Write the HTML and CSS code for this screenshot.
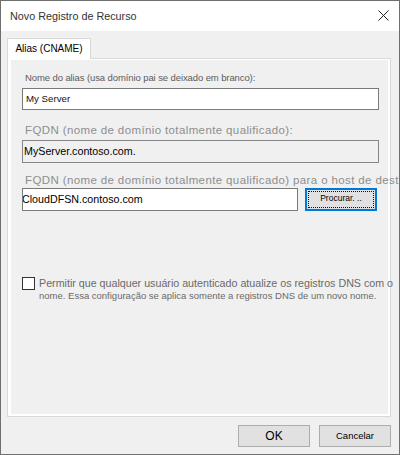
FILE: index.html
```html
<!DOCTYPE html>
<html lang="pt-BR">
<head>
<meta charset="utf-8">
<title>Novo Registro de Recurso</title>
<link rel="stylesheet" href="styles.css">
</head>
<body>
<div class="dialog">
  <div class="titlebar">
    <span class="title">Novo Registro de Recurso</span>
    <svg class="close" width="11" height="11" viewBox="0 0 11 11"><path d="M0.5 0.5 L10.5 10.5 M10.5 0.5 L0.5 10.5" stroke="#222" stroke-width="1" fill="none"/></svg>
  </div>
  <div class="body">
    <div class="tab">Alias (CNAME)</div>
    <div class="panel">
      <div class="lbl-small">Nome do alias (usa domínio pai se deixado em branco):</div>
      <div class="input1">My Server</div>
      <div class="lbl-fqdn first">FQDN (nome de domínio totalmente qualificado):</div>
      <div class="field2">MyServer.contoso.com.</div>
      <div class="lbl-fqdn second">FQDN (nome de domínio totalmente qualificado) para o host de dest</div>
      <div class="row">
        <div class="field3"><span>CloudDFSN.contoso.com</span></div>
        <div class="browse"><div class="focus">Procurar. ..</div></div>
      </div>
      <div class="check-row">
        <div class="checkbox"></div>
        <div class="check-text">
          <div class="line1">Permitir que qualquer usuário autenticado atualize os registros DNS com o</div>
          <div class="line2">nome. Essa configuração se aplica somente a registros DNS de um novo nome.</div>
        </div>
      </div>
    </div>
    <div class="buttons">
      <div class="btn ok">OK</div>
      <div class="btn cancel">Cancelar</div>
    </div>
  </div>
</div>
</body>
</html>
```

FILE: styles.css
```css
html, body {
  margin: 0;
  padding: 0;
  background: #f0f0f0;
}
body {
  font-family: "Liberation Sans", Arial, sans-serif;
}
.dialog {
  width: 400px;
  height: 455px;
  box-sizing: border-box;
  border: 1px solid #6f6f6f;
  background: #f0f0f0;
  overflow: hidden;
}
.titlebar {
  height: 30px;
  background: #ffffff;
  display: flex;
  align-items: center;
  justify-content: space-between;
  padding: 0 10px 0 9px;
}
.title {
  font-size: 10.8px;
  color: #333333;
}
.close {
  display: block;
  margin-top: -1px;
}
.body {
  padding: 7px 8px 0 6px;
}
.tab {
  position: relative;
  z-index: 1;
  width: 84px;
  height: 21px;
  box-sizing: border-box;
  border: 1px solid #d9d9d9;
  border-bottom: 0;
  background: #ffffff;
  margin-bottom: -1px;
  font-size: 10px;
  line-height: 19px;
  text-align: center;
  color: #000000;
}
.panel {
  height: 359px;
  box-sizing: border-box;
  border: 1px solid #d9d9d9;
  background: #f0f0f0;
  box-shadow: inset 3px 0 0 #ffffff, inset -2px 0 0 #ffffff, inset 0 -2px 0 #ffffff, inset 0 1px 0 #ffffff;
  padding: 13px 0 0 14px;
}
.lbl-small {
  font-size: 9.5px;
  line-height: 12px;
  letter-spacing: -0.1px;
  color: #5c5c5c;
  margin-left: 3px;
  white-space: nowrap;
}
.input1 {
  margin-top: 4px;
  width: 357px;
  height: 22px;
  box-sizing: border-box;
  border: 1px solid #7a7a7a;
  background: #ffffff;
  font-size: 9.7px;
  line-height: 20px;
  padding-left: 3px;
  color: #111111;
}
.lbl-fqdn {
  font-size: 11.5px;
  line-height: 14px;
  letter-spacing: 0.38px;
  color: #8e8e8e;
  margin-left: 3px;
  white-space: nowrap;
}
.lbl-fqdn.first {
  margin-top: 13px;
}
.lbl-fqdn.second {
  margin-top: 10px;
}
.field2 {
  margin-top: 3px;
  width: 357px;
  height: 23px;
  box-sizing: border-box;
  border: 1px solid #858585;
  background: #f0f0f0;
  font-size: 10.7px;
  line-height: 21px;
  padding-left: 1px;
  color: #000000;
}
.row {
  margin-top: 1px;
  display: flex;
  gap: 7px;
}
.field3 {
  width: 276px;
  height: 23px;
  box-sizing: border-box;
  border: 1px solid #7a7a7a;
  background: #ffffff;
  font-size: 10.7px;
  line-height: 21px;
  overflow: hidden;
  white-space: nowrap;
  color: #000000;
}
.field3 span {
  display: inline-block;
  margin-left: -1px;
}
.browse {
  width: 72px;
  height: 23px;
  box-sizing: border-box;
  border: 2px solid #0078d7;
  background: #e1e1e1;
  padding: 1px;
  display: flex;
}
.focus {
  flex: 1;
  border: 1px dotted #111111;
  font-size: 8.5px;
  line-height: 13px;
  text-align: center;
  color: #000000;
}
.check-row {
  margin-top: 66px;
  display: flex;
  align-items: flex-start;
  gap: 4px;
}
.checkbox {
  width: 13px;
  height: 13px;
  box-sizing: border-box;
  border: 1px solid #333333;
  background: #ffffff;
  flex: none;
}
.check-text {
  margin-top: -1px;
  white-space: nowrap;
  color: #6a6a6a;
}
.line1 {
  font-size: 10.7px;
  line-height: 14px;
}
.line2 {
  font-size: 9.5px;
  line-height: 12px;
}
.buttons {
  margin-top: 8px;
  display: flex;
  justify-content: flex-end;
  gap: 9px;
}
.btn {
  width: 72px;
  height: 22px;
  box-sizing: border-box;
  border: 1px solid #adadad;
  background: #e1e1e1;
  text-align: center;
  line-height: 20px;
  color: #000000;
}
.btn.ok {
  font-size: 12px;
}
.btn.cancel {
  font-size: 9.5px;
}
```
